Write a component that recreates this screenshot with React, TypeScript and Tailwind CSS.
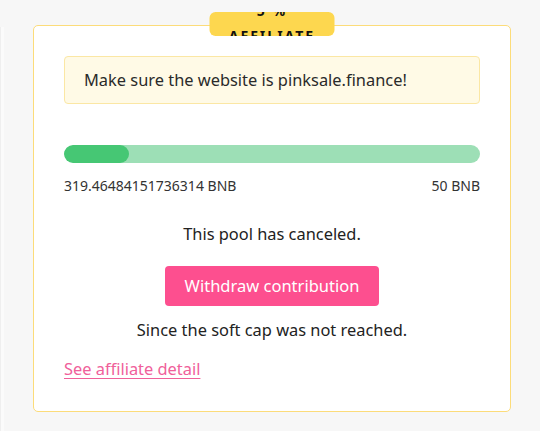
import React from "react";

export default function App() {
  const font = { fontFamily: '"Noto Sans", "Open Sans", sans-serif' };
  return (
    <div className="w-[540px] h-[431px] bg-[#f7f7f7] flex overflow-hidden" style={font}>
      <div className="w-[4px] mt-[27px] bg-[#fbfbfb] border-l border-[#efefef]" />
      <div className="relative ml-[29px] mt-[25px] w-[478px] h-[387px] bg-white border border-[#fcdc7a] rounded-[5px] px-[30px] pt-[30px] text-[#222]">
        <div className="absolute left-1/2 -translate-x-1/2 top-[-14px] w-[125px] h-[24px] bg-[#fdd74f] rounded-[6px] overflow-hidden">
          <div className="absolute left-0 right-0 top-[-14px] flex flex-col items-center text-[14px] leading-[25px] font-bold tracking-[2px] text-[#111]">
            <span>5 %</span>
            <span>AFFILIATE</span>
          </div>
        </div>

        <div className="h-[48px] bg-[#fffae6] border border-[#fbe7a4] rounded-[4px] flex items-center px-[19px] text-[16.4px] text-[#2a2a2a]">
          Make sure the website is pinksale.finance!
        </div>

        <div className="mt-[41px] h-[18px] w-full rounded-full bg-[#9ddfb6] overflow-hidden">
          <div className="h-full w-[65px] rounded-full bg-[#46c774]" />
        </div>

        <div className="mt-[13px] flex justify-between text-[14px] leading-[20px] text-[#333]">
          <span>319.46484151736314 BNB</span>
          <span>50 BNB</span>
        </div>

        <div className="mt-[26px] text-center text-[16.4px] leading-[24px] text-[#222]">
          This pool has canceled.
        </div>

        <div className="mt-[20px] flex justify-center">
          <button className="w-[214px] h-[40px] bg-[#fd4f8f] rounded-[4px] text-white text-[16.5px]">
            Withdraw contribution
          </button>
        </div>

        <div className="mt-[12px] text-center text-[16.4px] leading-[24px] text-[#222]">
          Since the soft cap was not reached.
        </div>

        <div className="mt-[15px] text-[16.4px] leading-[24px]">
          <a className="text-[#f0609a] underline underline-offset-[3px]" href="#">
            See affiliate detail
          </a>
        </div>
      </div>
    </div>
  );
}
